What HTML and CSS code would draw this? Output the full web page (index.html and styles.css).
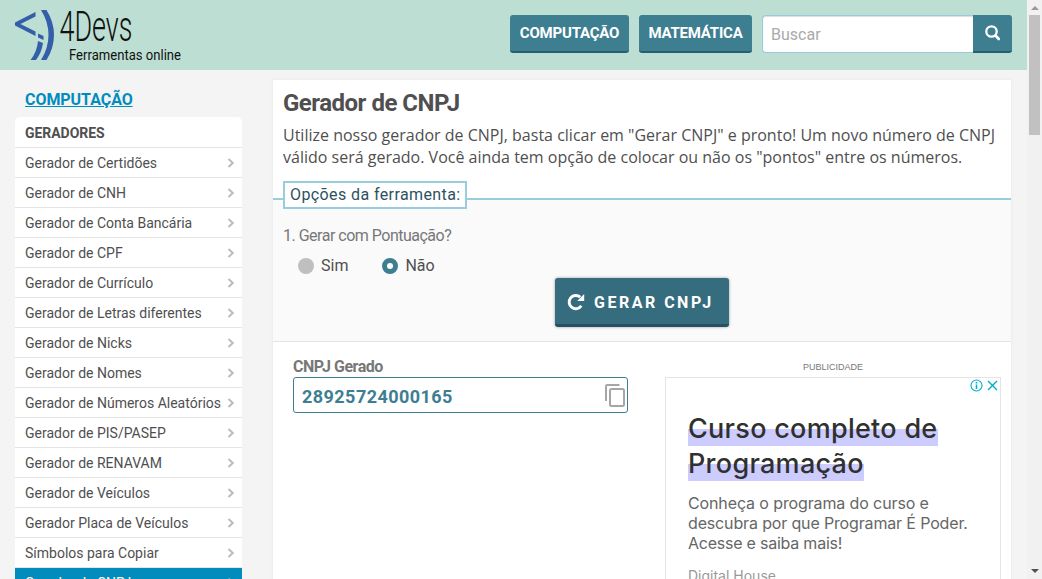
FILE: index.html
```html
<!DOCTYPE html>
<html lang="pt-BR">
<head>
<meta charset="utf-8">
<title>Gerador de CNPJ</title>
<link rel="stylesheet" href="styles.css">
</head>
<body>
<svg class="defs" width="0" height="0"><symbol id="chev" viewBox="0 0 8 10"><path d="M1.5 1 5.8 5 1.5 9" fill="none" stroke="currentColor" stroke-width="1.9"/></symbol></svg>
<div class="window">
<div class="page">
  <header class="header">
    <svg class="logo" width="170" height="62" viewBox="14 0 170 62">
      <g fill="#345ea9">
        <path d="M35.5 12 15 22.500v3l20.500 10.500v-4.500L20.500 24l15-7.500z"/>
        <path d="M38 33.500 43.500 36v4L38 37.500zM38 41l5 2q-1.500 10-7 17h-5.500q6.500-8 7.500-19z"/>
        <path d="M41 10h5.500q7.500 12 7.500 25t-7.500 25H41q7.500-12 7.500-25T41 10z"/>
      </g>
      <text class="brand" x="59.500" y="41" textLength="73" lengthAdjust="spacingAndGlyphs">4Devs</text>
      <text class="slogan" x="69" y="60" textLength="112" lengthAdjust="spacingAndGlyphs">Ferramentas online</text>
    </svg>
    <nav class="nav">
      <a class="nav-btn wide">COMPUTAÇÃO</a>
      <a class="nav-btn">MATEMÁTICA</a>
      <div class="search"><span class="search-field">Buscar</span><span class="search-btn"><svg width="16" height="16" viewBox="0 0 16 16" fill="none" stroke="#fff"><circle cx="6.500" cy="6.500" r="5.200" stroke-width="2.300"/><path d="m10.500 10.500 3.300 3.500" stroke-width="2.600" stroke-linecap="round"/></svg></span></div>
    </nav>
  </header>
  <div class="columns">
    <aside class="side">
      <a class="side-title">COMPUTAÇÃO</a>
      <ul class="menu">
        <li class="menu-head">GERADORES</li>
        <li>Gerador de Certidões<svg><use href="#chev"/></svg></li>
        <li>Gerador de CNH<svg><use href="#chev"/></svg></li>
        <li>Gerador de Conta Bancária<svg><use href="#chev"/></svg></li>
        <li>Gerador de CPF<svg><use href="#chev"/></svg></li>
        <li>Gerador de Currículo<svg><use href="#chev"/></svg></li>
        <li>Gerador de Letras diferentes<svg><use href="#chev"/></svg></li>
        <li>Gerador de Nicks<svg><use href="#chev"/></svg></li>
        <li>Gerador de Nomes<svg><use href="#chev"/></svg></li>
        <li>Gerador de Números Aleatórios<svg><use href="#chev"/></svg></li>
        <li>Gerador de PIS/PASEP<svg><use href="#chev"/></svg></li>
        <li>Gerador de RENAVAM<svg><use href="#chev"/></svg></li>
        <li>Gerador de Veículos<svg><use href="#chev"/></svg></li>
        <li>Gerador Placa de Veículos<svg><use href="#chev"/></svg></li>
        <li>Símbolos para Copiar<svg><use href="#chev"/></svg></li>
        <li class="active">Gerador de CNPJ<svg><use href="#chev"/></svg></li>
      </ul>
    </aside>
    <main class="main">
      <div class="intro">
        <h1>Gerador de CNPJ</h1>
        <p>Utilize nosso gerador de CNPJ, basta clicar em "Gerar CNPJ" e pronto! Um novo número de CNPJ<br>válido será gerado. Você ainda tem opção de colocar ou não os "pontos" entre os números.</p>
      </div>
      <section class="options">
        <div class="legend">Opções da ferramenta:</div>
        <div class="question">1. Gerar com Pontuação?</div>
        <div class="radios">
          <span class="radio"><i class="dot"></i>Sim</span>
          <span class="radio"><i class="dot on"></i>Não</span>
        </div>
        <div class="generate"><svg width="18" height="18" viewBox="0 0 18 18"><path d="M14.300 12.700A6.600 6.600 0 1 1 13.200 4.200" fill="none" stroke="#fff" stroke-width="2.900"/><path d="M17.200 1v7h-7z" fill="#fff"/></svg>GERAR CNPJ</div>
      </section>
      <section class="result">
        <div class="result-col">
          <div class="label">CNPJ Gerado</div>
          <div class="output"><span>28925724000165</span><svg width="20" height="23" viewBox="0 0 20 23" fill="none" stroke="#a6a6a6" stroke-width="2"><path d="M1 17V2.200Q1 1 2.200 1H14.500"/><rect x="5" y="5" width="14" height="17" rx="1.500"/></svg></div>
        </div>
        <div class="ad-col">
          <div class="ad-label">PUBLICIDADE</div>
          <div class="ad">
            <div class="ad-icons"><svg width="30" height="14" viewBox="0 0 30 14" fill="none" stroke="#00aecd"><circle cx="6.500" cy="7.500" r="5.500" stroke-width="1.100"/><path d="M6.500 6.500v4.500M6.500 4v1.500" stroke-width="1.600"/><path d="m18 3 9 9m0-9-9 9" stroke-width="1.400"/></svg></div>
            <div class="ad-title"><span class="t1">Curso completo de</span><br><span class="t2">Programação</span></div>
            <div class="ad-text"><span class="b1">Conheça o programa do curso e</span><br><span class="b2">descubra por que Programar É Poder.</span><br><span class="b3">Acesse e saiba mais!</span></div>
            <div class="ad-by">Digital House</div>
          </div>
        </div>
      </section>
    </main>
  </div>
</div>
<div class="scrollbar"><i class="up"></i><i class="thumb"></i><i class="down"></i></div>
</div>
</body>
</html>
```
FILE: styles.css
```css
* { box-sizing: border-box; }
body { margin: 0; height: 579px; overflow: hidden; background: #f4f4f4; font-family: Roboto, sans-serif; color: #4f4f4f; }
.defs { display: block; height: 0; }
.window { display: flex; height: 579px; overflow: hidden; }
.page { width: 1027px; height: 579px; overflow: hidden; }
.header { height: 70px; background: #bddfd3; display: flex; justify-content: space-between; padding: 0 15px 0 14px; }
.logo { overflow: visible; }
.brand { font-size: 42px; font-weight: 300; fill: #111; }
.slogan { font-size: 15.5px; font-weight: 400; fill: #111; }
.nav { display: flex; gap: 10px; padding-top: 15px; }
.nav-btn { width: 113px; height: 38px; border-radius: 3px; background: #3e7e91; border-bottom: 2px solid #285f70; color: #fff; font-weight: 700; font-size: 15px; letter-spacing: -.2px; line-height: 37px; text-align: center; white-space: nowrap; }
.nav-btn.wide { width: 119px; }
.search { display: flex; width: 250px; height: 38px; }
.search-field { flex: 1; background: #fff; border: 1px solid #99c9dc; border-right: 0; border-radius: 4px 0 0 4px; box-shadow: inset 0 1px 1px #ddd; padding-left: 8px; line-height: 37px; font-size: 16px; color: #aaa; }
.search-btn { width: 39px; background: #3e7e91; border-bottom: 2px solid #285f70; border-radius: 0 3px 3px 0; display: flex; align-items: center; justify-content: center; }
.columns { display: flex; gap: 31px; padding-left: 15px; }
.side { width: 227px; padding-top: 20px; }
.side-title { display: block; height: 27px; padding-left: 10px; font-size: 16px; line-height: 20px; font-weight: 700; letter-spacing: -.05px; color: #008dbd; text-decoration: underline; }
.menu { list-style: none; margin: 0; padding: 0; background: #fff; border-radius: 5px 5px 0 0; font-size: 14px; }
.menu li { height: 30px; display: flex; align-items: center; justify-content: space-between; padding: 0 7px 0 10px; border-bottom: 1px solid #e4e4e4; white-space: nowrap; }
.menu svg { width: 8px; height: 10px; color: #bbb; }
.menu .menu-head { height: 31px; padding-top: 2px; font-weight: 700; letter-spacing: -.05px; }
.menu .active { background: #008dbd; color: #fff; }
.menu .active svg { color: #fff; }
.main { width: 738px; margin-top: 10px; height: 520px; background: #fff; box-shadow: 0 0 3px #e4e4e4; }
.intro { height: 118px; padding: 8px 10px 0; }
h1 { margin: 0; font-size: 24px; line-height: 30px; font-weight: 700; letter-spacing: -.5px; }
p { margin: 6px 0 0; font: 16px/22px "Open Sans", sans-serif; white-space: nowrap; }
.options { height: 144px; border-top: 2px solid #99cddd; border-bottom: 1px solid #e4e4e4; background: #fafafa; padding-left: 10px; }
.legend { width: 184px; height: 28px; margin-top: -19px; border: 2px solid #99cddd; background: #fff; padding-left: 5px; font-size: 16px; line-height: 23px; letter-spacing: .4px; color: #2c5260; white-space: nowrap; }
.question { margin-top: 17px; font-size: 16px; line-height: 20px; letter-spacing: -.5px; color: #777; }
.radios { display: flex; gap: 34px; padding: 10px 0 0 15px; height: 32px; }
.radio { display: flex; gap: 7px; font-size: 16px; line-height: 20px; }
.dot { width: 16px; height: 16px; margin-top: 2px; border-radius: 50%; background: #bfbfbf; }
.dot.on { background: #fff; border: 5px solid #3e7e91; }
.generate { width: 174px; height: 49px; margin-left: 272px; border-radius: 3px; background: #366d7e; border-bottom: 3px solid #285062; box-shadow: 0 0 3px #999; display: flex; align-items: center; gap: 9px; padding: 2px 0 0 12px; color: #fff; font-size: 16px; font-weight: 700; letter-spacing: 2.5px; white-space: nowrap; }
.result { display: flex; gap: 37px; padding-left: 20px; }
.result-col { width: 335px; padding-top: 15px; }
.label { font-size: 16px; line-height: 20px; height: 20px; font-weight: 700; letter-spacing: -.5px; color: #777; }
.output { height: 36px; border: 1px solid #3e7e91; border-radius: 3px; display: flex; align-items: center; justify-content: space-between; padding: 1px 2px 0 8px; color: #3e7e91; font-size: 18px; font-weight: 700; letter-spacing: .45px; }
.output span { padding-top: 2px; }
.ad-col { width: 336px; padding-top: 19px; }
.ad-label { height: 16px; font: 9px/12px "Liberation Sans", sans-serif; color: #777; text-align: center; }
.ad { height: 240px; border: 1px solid #e4e4e4; padding-left: 22px; font-family: Inter, sans-serif; }
.ad-icons { height: 33px; display: flex; justify-content: flex-end; }
.ad-title { font-size: 27px; line-height: 36px; font-weight: 500; letter-spacing: .28px; color: #303030; white-space: nowrap; }
.ad-title span { display: inline-block; height: 35px; vertical-align: top; background: linear-gradient(transparent 18px, #ccccff 18px); }
.ad-title { height: 70px; display: grid; grid-template-rows: 35px 35px; justify-items: start; }
.ad-title br { display: none; }
.ad-text { margin-top: 12px; font-size: 16px; line-height: 20px; color: #666; white-space: nowrap; }
.b1 { letter-spacing: -.12px; }
.b2 { letter-spacing: -.15px; }
.b3 { letter-spacing: -.23px; }
.ad-by { margin-top: 14px; font-size: 14px; line-height: 18px; color: #999; }
.scrollbar { width: 15px; height: 579px; background: #f1f1f1; display: flex; flex-direction: column; align-items: center; }
.up { margin-top: 6px; border: 4px solid transparent; border-top: 0; border-bottom-color: #999; }
.thumb { width: 11px; height: 120px; margin-top: 5px; background: #c1c1c1; }
.down { margin-top: auto; margin-bottom: 6px; border: 4px solid transparent; border-bottom: 0; border-top-color: #505050; }
```
